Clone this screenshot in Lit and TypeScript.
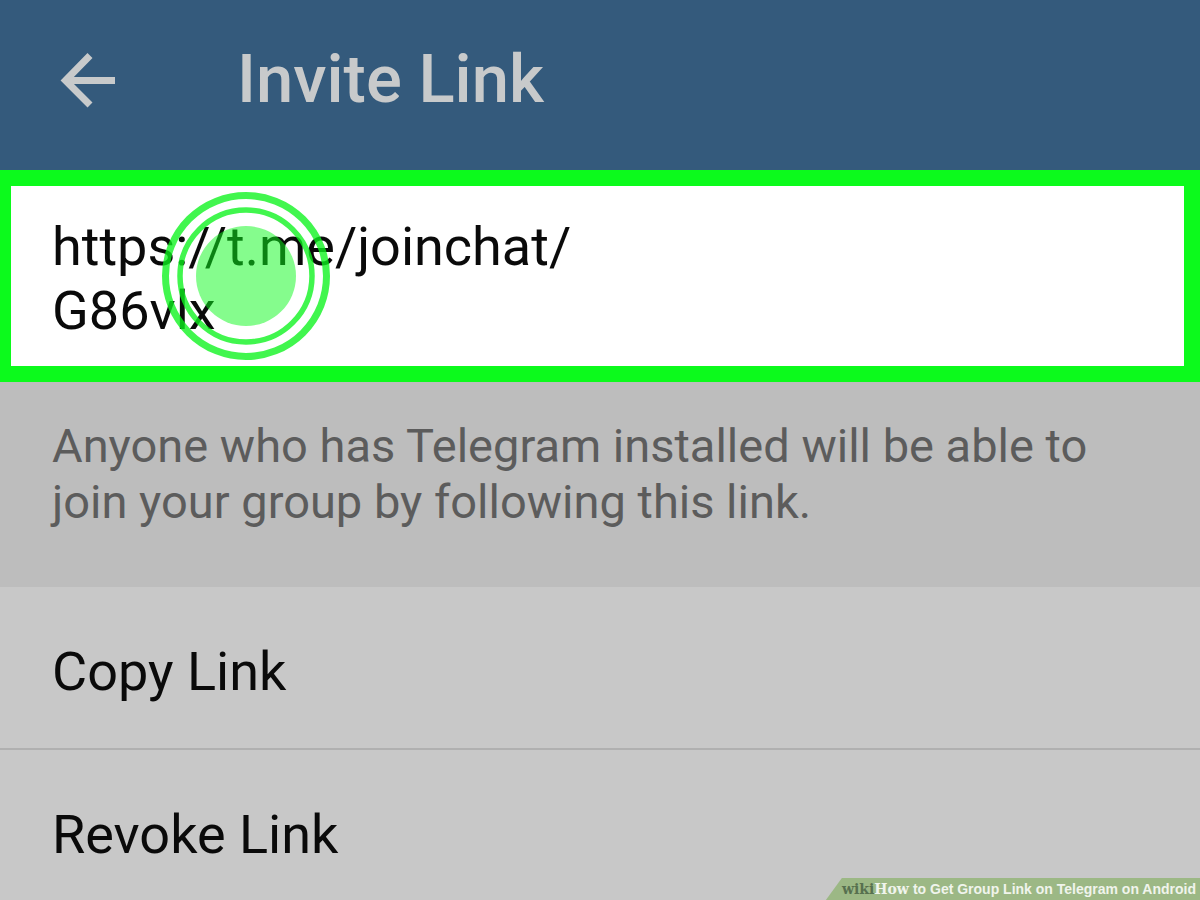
import { LitElement, html, css } from "lit";
import { customElement, property } from "lit/decorators.js";

@customElement("tap-marker")
export class TapMarker extends LitElement {
  static styles = css`
    :host {
      display: block;
      width: 168px;
      height: 168px;
      pointer-events: none;
    }
    .marker {
      display: block;
      width: 100%;
      height: 100%;
    }
  `;

  render() {
    return html`
      <svg class="marker" viewBox="0 0 168 168" aria-hidden="true">
        <g fill="none" stroke="#0cf41c" stroke-opacity="0.78">
          <circle cx="84" cy="84" r="80.5" stroke-width="7"></circle>
          <circle cx="84" cy="84" r="66" stroke-width="5.5"></circle>
        </g>
        <circle cx="84" cy="84" r="50" fill="#0cfa1c" fill-opacity="0.5"></circle>
      </svg>
    `;
  }
}

@customElement("source-caption")
export class SourceCaption extends LitElement {
  @property() caption = "";

  static styles = css`
    :host {
      display: block;
    }
    .bar {
      display: flex;
      align-items: center;
      height: 22px;
      padding: 0 4px 0 16px;
      background: #9cb885;
      clip-path: polygon(16px 0, 100% 0, 100% 100%, 0 100%);
      color: #f0f4ec;
      font: bold 14px/22px "Liberation Sans", Arial, sans-serif;
      white-space: nowrap;
    }
    .brand {
      margin-right: 4px;
      font: bold 14px/22px "DejaVu Serif", serif;
    }
    .wiki {
      color: #57704f;
    }
  `;

  render() {
    return html`
      <div class="bar">
        <span class="brand"><span class="wiki">wiki</span>How</span>
        <span>${this.caption}</span>
      </div>
    `;
  }
}

@customElement("app-root")
export class AppRoot extends LitElement {
  static styles = css`
    :host {
      display: flex;
      flex-direction: column;
      position: relative;
      height: 100vh;
      overflow: hidden;
      background: #c8c8c8;
      color: #0a0a0a;
      font-family: Roboto, sans-serif;
    }
    .header {
      display: flex;
      align-items: center;
      flex: none;
      gap: 113px;
      padding: 39px 52px 51px;
      background: #345a7c;
      color: #c8cacb;
    }
    .back {
      display: block;
      padding: 0 4px;
      border: 0;
      background: none;
      color: inherit;
      cursor: pointer;
    }
    .arrow {
      display: block;
      width: 64px;
      height: 64px;
    }
    .title {
      margin: 0;
      font-size: 67px;
      line-height: 80px;
      font-weight: 500;
    }
    .link-box {
      position: relative;
      flex: none;
      padding: 29px 41px 23px;
      border: solid #0cfa1c;
      border-width: 16px 16px 16px 11px;
      background: #fff;
      font-size: 54px;
      line-height: 64px;
    }
    .link {
      color: inherit;
      text-decoration: none;
    }
    .tap {
      position: absolute;
      left: 151px;
      top: 6px;
    }
    .hint {
      flex: none;
      margin: 0;
      padding: 36px 52px 57px;
      background: #bdbdbd;
      color: #5c5c5c;
      font-size: 47px;
      line-height: 56px;
    }
    .actions {
      flex: none;
      margin: 0;
      padding: 0;
      list-style: none;
    }
    .item + .item {
      border-top: 2px solid #b0b0b0;
    }
    .action {
      display: block;
      width: 100%;
      padding: 53px 52px 44px;
      border: 0;
      background: none;
      color: inherit;
      font: 54px/64px Roboto, sans-serif;
      text-align: left;
      cursor: pointer;
    }
    .source {
      position: absolute;
      right: 0;
      bottom: 0;
    }
  `;

  private actions = ["Copy Link", "Revoke Link"];

  render() {
    return html`
      <header class="header">
        <button class="back" type="button" aria-label="Back">
          <svg class="arrow" viewBox="0 0 64 64" aria-hidden="true">
            <path
              d="M34 8.500 9.500 33.500 34 58M9.500 33.500H59"
              fill="none"
              stroke="currentColor"
              stroke-width="7"
            ></path>
          </svg>
        </button>
        <h1 class="title">Invite Link</h1>
      </header>
      <section class="link-box">
        <a class="link" href="https://t.me/joinchat/G86vlx"
          >https://t.me/joinchat/<br />G86vlx</a
        >
        <tap-marker class="tap"></tap-marker>
      </section>
      <p class="hint">
        Anyone who has Telegram installed will be able to join your group by
        following this link.
      </p>
      <ul class="actions">
        ${this.actions.map(
          (label) => html`
            <li class="item">
              <button class="action" type="button">${label}</button>
            </li>
          `
        )}
      </ul>
      <source-caption
        class="source"
        caption="to Get Group Link on Telegram on Android"
      ></source-caption>
    `;
  }
}
